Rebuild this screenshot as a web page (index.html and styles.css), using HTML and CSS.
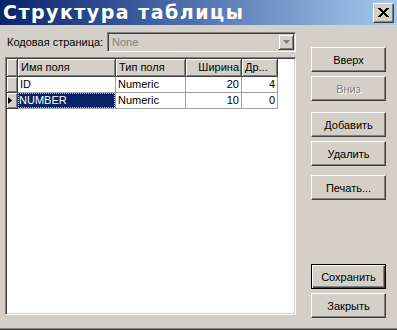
FILE: index.html
```html
<!DOCTYPE html>
<html lang="ru">
<head>
<meta charset="UTF-8">
<title>Структура таблицы</title>
<link rel="stylesheet" href="styles.css">
</head>
<body>
<div class="window">
  <div class="titlebar">
    <span class="title">Структура таблицы</span>
    <button class="close-btn" title="Закрыть">
      <svg width="11" height="10" viewBox="0 0 11 10">
        <path d="M1 0 L10 9 M0 0 L9 9 M2 0 L11 9 M10 0 L1 9 M11 0 L2 9 M9 0 L0 9" stroke="#000" stroke-width="1" shape-rendering="crispEdges"/>
      </svg>
    </button>
  </div>

  <div class="content">
    <div class="left">
      <div class="codepage">
        <label class="codepage-label">Кодовая страница:</label>
        <div class="combo">
          <span class="combo-text">None</span>
          <span class="combo-arrow">
            <svg width="7" height="4" viewBox="0 0 7 4"><polygon points="0,0 7,0 3.5,4" fill="#808080"/></svg>
          </span>
        </div>
      </div>

      <div class="grid">
        <div class="grid-row head">
          <div class="cell ind"></div>
          <div class="cell">Имя поля</div>
          <div class="cell">Тип поля</div>
          <div class="cell num">Ширина</div>
          <div class="cell">Др...</div>
        </div>
        <div class="grid-row">
          <div class="cell ind"></div>
          <div class="cell">ID</div>
          <div class="cell">Numeric</div>
          <div class="cell num">20</div>
          <div class="cell num">4</div>
        </div>
        <div class="grid-row">
          <div class="cell ind">
            <svg width="4" height="7" viewBox="0 0 4 7"><polygon points="0,0 4,3.5 0,7" fill="#000"/></svg>
          </div>
          <div class="cell selected"><span>NUMBER</span></div>
          <div class="cell">Numeric</div>
          <div class="cell num">10</div>
          <div class="cell num">0</div>
        </div>
      </div>
    </div>

    <div class="right">
      <button class="btn up">Вверх</button>
      <button class="btn pair" disabled>Вниз</button>
      <button class="btn add">Добавить</button>
      <button class="btn pair">Удалить</button>
      <button class="btn print">Печать...</button>
      <div class="spacer"></div>
      <button class="btn default">Сохранить</button>
      <button class="btn pair">Закрыть</button>
    </div>
  </div>
</div>
</body>
</html>
```

FILE: styles.css
```css
body {
  margin: 0;
  padding: 0;
  background: #d4d0c8;
  font-family: "Liberation Sans", Arial, sans-serif;
  font-size: 11px;
  color: #000;
}
.window {
  width: 397px;
  height: 330px;
  display: flex;
  flex-direction: column;
  background: #d4d0c8;
  border-bottom: 1px solid #404040;
  box-shadow: inset 0 -1px 0 #808080;
  box-sizing: border-box;
}

/* заголовок окна */
.titlebar {
  height: 25px;
  display: flex;
  align-items: center;
  padding: 0 3px 0 3px;
  background: linear-gradient(to right, #0a246a 0%, #3a5a9a 35%, #a6caf0 100%);
}
.title {
  flex: 1;
  color: #fff;
  font-family: "DejaVu Sans", Verdana, sans-serif;
  font-weight: bold;
  font-size: 19px;
  letter-spacing: 1.5px;
  line-height: 25px;
  white-space: nowrap;
}
.close-btn {
  width: 21px;
  height: 20px;
  padding: 0;
  margin-top: 1px;
  background: #d4d0c8;
  border: 1px solid;
  border-color: #fff #404040 #404040 #fff;
  box-shadow: inset -1px -1px 0 #808080;
  display: flex;
  align-items: center;
  justify-content: center;
}

/* основная часть */
.content {
  flex: 1;
  display: flex;
  padding: 7px 12px 0 5px;
  gap: 15px;
}
.left {
  width: 291px;
  display: flex;
  flex-direction: column;
}
.codepage {
  display: flex;
  align-items: center;
  height: 20px;
}
.codepage-label {
  width: 100px;
  padding-left: 2px;
  white-space: nowrap;
}
.combo {
  width: 189px;
  height: 20px;
  box-sizing: border-box;
  display: flex;
  align-items: center;
  background: #d4d0c8;
  border: 1px solid;
  border-color: #808080 #fff #fff #808080;
  box-shadow: inset 1px 1px 0 #404040, inset -1px -1px 0 #d4d0c8;
}
.combo-text {
  flex: 1;
  padding-left: 4px;
  color: #808080;
}
.combo-arrow {
  width: 16px;
  height: 16px;
  margin-right: 1px;
  box-sizing: border-box;
  display: flex;
  align-items: center;
  justify-content: center;
  background: #d4d0c8;
  border: 1px solid;
  border-color: #d4d0c8 #404040 #404040 #d4d0c8;
  box-shadow: inset 1px 1px 0 #fff, inset -1px -1px 0 #808080;
}

/* таблица полей */
.grid {
  margin-top: 5px;
  height: 258px;
  box-sizing: border-box;
  background: #fff;
  border: 1px solid;
  border-color: #808080 #fff #fff #808080;
  box-shadow: inset 1px 1px 0 #404040, inset -1px -1px 0 #d4d0c8;
  padding: 1px;
}
.grid-row {
  display: grid;
  grid-template-columns: 11px 98px 70px 56px 36px;
  height: 16px;
}
.grid-row.head {
  height: 18px;
}
.cell {
  box-sizing: border-box;
  border-right: 1px solid #a0a0a0;
  border-bottom: 1px solid #a0a0a0;
  padding: 0 2px;
  line-height: 15px;
  white-space: nowrap;
  overflow: hidden;
}
.cell.num { text-align: right; }
.head .cell,
.cell.ind {
  background: #d4d0c8;
  border-color: #404040;
  box-shadow: inset 1px 1px 0 #fff, inset -1px -1px 0 #808080;
}
.head .cell {
  line-height: 17px;
  padding-left: 3px;
}
.cell.ind {
  padding: 0 0 0 1px;
  display: flex;
  align-items: center;
}
.cell.selected {
  background: #0a246a;
  color: #fff;
  padding: 0;
}
.cell.selected span {
  display: block;
  height: 15px;
  padding-left: 1px;
  outline: 1px dotted #c8c8a0;
  outline-offset: -1px;
}

/* кнопки */
.right {
  width: 75px;
  display: flex;
  flex-direction: column;
  padding-top: 15px;
}
.btn {
  width: 75px;
  height: 25px;
  padding: 0;
  font-family: "Liberation Sans", Arial, sans-serif;
  font-size: 11px;
  color: #000;
  background: #d4d0c8;
  border: 1px solid;
  border-color: #fff #404040 #404040 #fff;
  box-shadow: inset -1px -1px 0 #808080;
}
.btn:disabled {
  color: #808080;
  text-shadow: 1px 1px 0 #fff;
}
.btn.pair { margin-top: 4px; }
.btn.add { margin-top: 11px; }
.btn.print { margin-top: 9px; }
.btn.default {
  border: 1px solid #000;
  box-shadow: inset 1px 1px 0 #fff, inset -1px -1px 0 #404040, inset -2px -2px 0 #808080;
}
.spacer { flex: 1; }
.right .btn:last-child { margin-bottom: 11px; }
```
